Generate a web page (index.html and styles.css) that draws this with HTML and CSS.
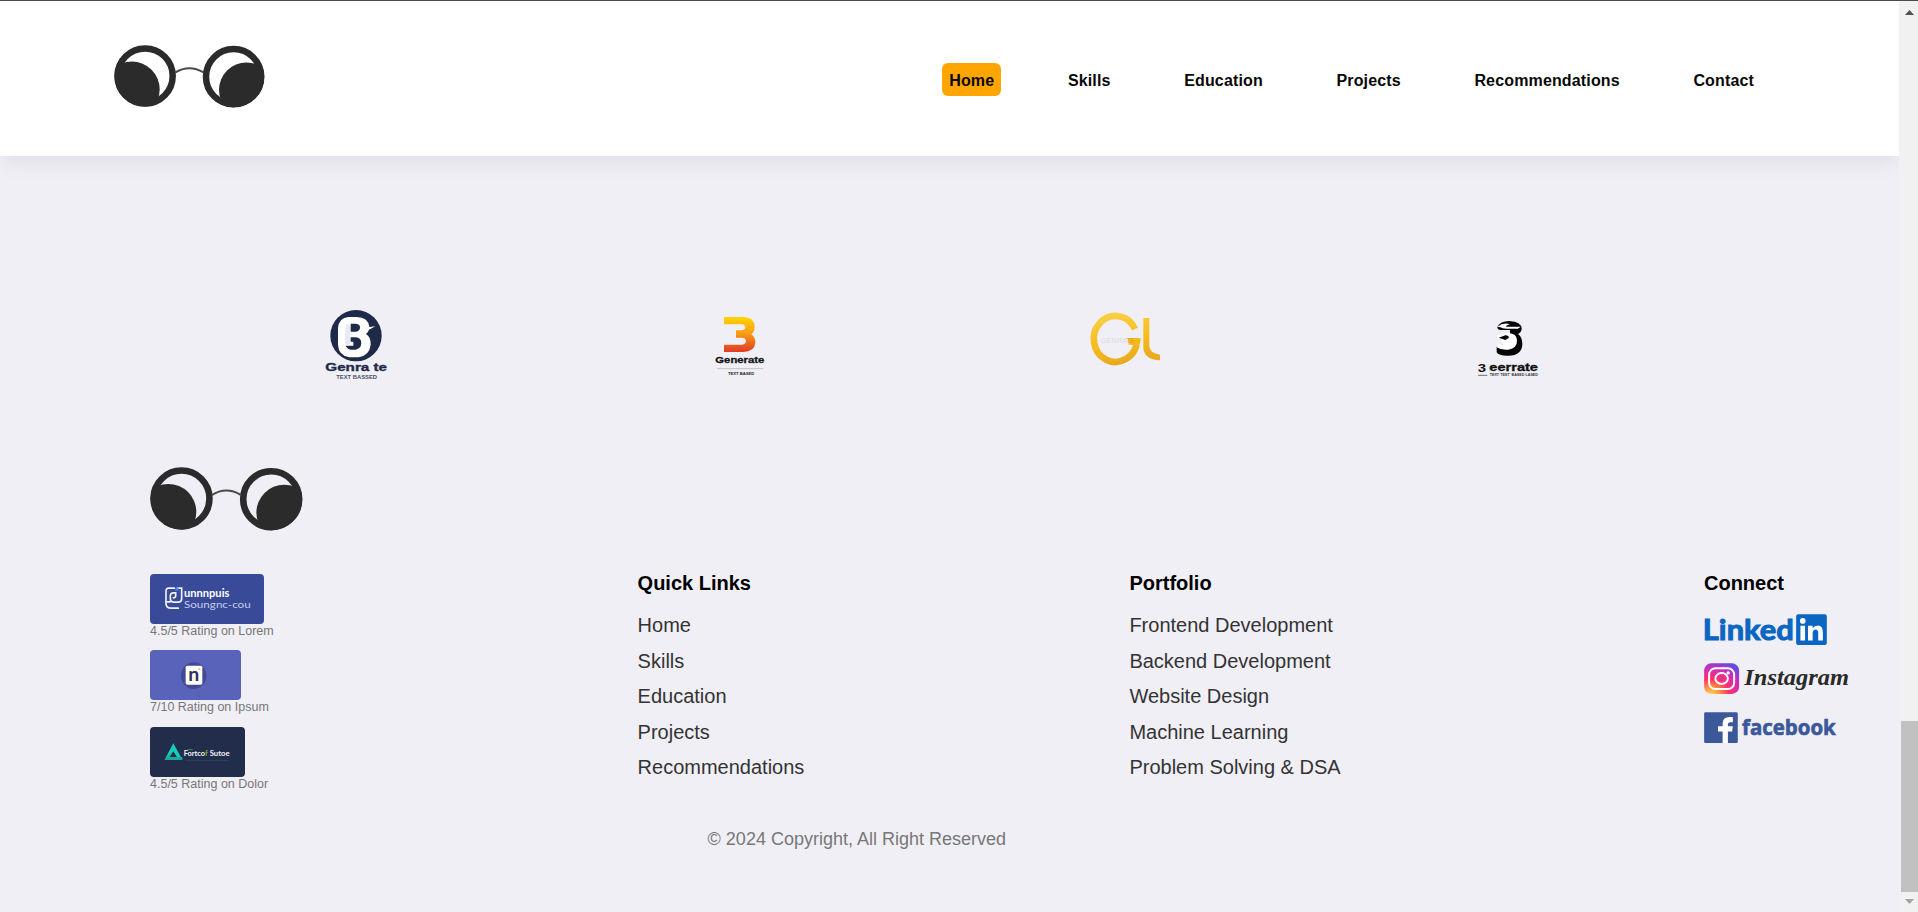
FILE: index.html
```html
<!DOCTYPE html>
<html lang="en">
<head>
<meta charset="utf-8">
<title>Portfolio</title>
<link rel="stylesheet" href="styles.css">
</head>
<body>
<svg class="defs" aria-hidden="true">
  <defs>
    <clipPath id="lensL"><circle cx="55.1" cy="46" r="30.6"/></clipPath>
    <clipPath id="lensR"><circle cx="143.6" cy="46.7" r="30.6"/></clipPath>
    <symbol id="glasses" viewBox="24 14 152 66">
      <g fill="none" stroke="#2b2b2b">
        <circle cx="55.1" cy="46" r="27.6" stroke-width="6.5"/>
        <circle cx="143.6" cy="46.7" r="27.6" stroke-width="6.5"/>
        <path d="M85 42.6Q99 33.8 113.5 42.4" stroke-width="2" stroke="#4a4a4a"/>
      </g>
      <circle cx="42" cy="59.3" r="27.7" fill="#2b2b2b" clip-path="url(#lensL)"/>
      <circle cx="156.6" cy="60" r="27.6" fill="#2b2b2b" clip-path="url(#lensR)"/>
    </symbol>
    <linearGradient id="sunset" x1="0" y1="0" x2="0" y2="1"><stop offset="0" stop-color="#ffd400"/><stop offset=".45" stop-color="#f9a015"/><stop offset="1" stop-color="#e03a26"/></linearGradient>
    <linearGradient id="gold" gradientUnits="userSpaceOnUse" x1="30" y1="40" x2="60" y2="200"><stop offset="0" stop-color="#fbd04a"/><stop offset=".6" stop-color="#f5bd1d"/><stop offset="1" stop-color="#eaa91e"/></linearGradient>
    <radialGradient id="insta" cx=".2" cy="1.02" r="1.15"><stop offset="0" stop-color="#ffd45a"/><stop offset=".2" stop-color="#ff9a3c"/><stop offset=".45" stop-color="#ff3168"/><stop offset=".72" stop-color="#d42bb5"/><stop offset="1" stop-color="#5b4ee0"/></radialGradient>
  </defs>
</svg>

<div class="window">
  <div class="page">
    <header class="header">
      <svg class="header-logo"><use href="#glasses"/></svg>
      <nav class="nav">
        <a class="nav-link active">Home</a>
        <a class="nav-link">Skills</a>
        <a class="nav-link">Education</a>
        <a class="nav-link">Projects</a>
        <a class="nav-link">Recommendations</a>
        <a class="nav-link">Contact</a>
      </nav>
    </header>

    <section class="clients">
      <svg class="client" viewBox="-12 15 300 270">
        <circle cx="138" cy="122" r="77" fill="#1e2a47"/>
        <path d="M84 100Q86 68 116 66H140Q176 68 178 96L196 94L177 104Q174 112 168 117Q184 127 182 150Q178 182 146 187H118Q86 182 84 150Z" fill="#fff"/>
        <path d="M110 84Q102 110 106 150L120 148V94Z" fill="#e9eaf1"/>
        <path d="M122 86H138Q151 88 150 98Q149 109 136 110H122ZM122 127H137Q154 129 154 144Q153 161 137 164Q113 167 107 152H130V140H122Z" fill="#1e2a47"/>
        <text class="wide" x="46" y="229" font-size="32" textLength="185" lengthAdjust="spacingAndGlyphs" fill="#1e2a47" stroke="#1e2a47">Genra te</text>
        <text class="wide" x="79" y="251" font-size="15" textLength="122" lengthAdjust="spacingAndGlyphs" fill="#4a5268">TEXT BASSED</text>
      </svg>
      <svg class="client" viewBox="-30 0 300 270">
        <path d="M72 51H130Q164 53 164 80Q164 96 154 103Q166 111 166 128Q164 154 130 156H72V134H126Q138 132 138 123Q137 113 125 113H108V91H124Q136 90 136 82Q135 74 126 73H72Z" fill="url(#sunset)"/>
        <text class="wide" x="46" y="190" font-size="29" textLength="147" lengthAdjust="spacingAndGlyphs" fill="#151515" stroke="#151515">Generate</text>
        <path d="M51 206H190" stroke="#aaaab0" stroke-width="2"/>
        <text class="wide" x="84" y="225" font-size="12" textLength="79" lengthAdjust="spacingAndGlyphs" fill="#222">TEXT BASED</text>
      </svg>
      <svg class="client" viewBox="-18 0 300 270">
        <text x="62" y="130" class="thin" font-size="24" textLength="80" lengthAdjust="spacingAndGlyphs" fill="#d9d9dd">GENRA</text>
        <path d="M165 87A65 69 0 1 0 171 124H146" fill="none" stroke="url(#gold)" stroke-width="20"/>
        <text x="140" y="130" class="wide" font-size="22" textLength="22" lengthAdjust="spacingAndGlyphs" fill="#e8a51e">TE</text>
        <path d="M190 54H208V138Q209 160 240 164V181Q190 178 190 140Z" fill="url(#gold)"/>
      </svg>
      <svg class="client" viewBox="-6 -30 300 270">
        <path d="M112 51Q120 33 148 33Q184 35 185 56Q185 66 174 72Q187 80 187 104Q185 136 146 137Q116 138 110 127V110H150V60H122Q112 60 112 51Z" fill="#050505"/>
        <path d="M112 51Q130 36 150 43Q139 45 138 50H182L174 56H140Q126 56 122 52Z" fill="#fff"/>
        <path d="M112 78Q124 67 146 69Q170 71 171 90Q172 115 145 119Q122 121 110 112L116 103Q128 107 136 105L122 94L132 85L116 86Z" fill="#fff"/>
        <path d="M116 83L136 76Q148 76 146 84L136 90Z" fill="#050505"/>
        <text class="wide" x="53" y="185" font-size="34" textLength="25" lengthAdjust="spacingAndGlyphs" fill="#111">3</text>
        <text class="wide" x="88" y="182" font-size="34" textLength="146" lengthAdjust="spacingAndGlyphs" fill="#111" stroke="#111">eerrate</text>
        <path d="M54 196H82" stroke="#333" stroke-width="2"/>
        <text class="wide" x="89" y="197" font-size="11" textLength="145" lengthAdjust="spacingAndGlyphs" fill="#333">TEXT TEST' BASED LASED</text>
      </svg>
    </section>

    <footer class="footer">
      <svg class="footer-logo"><use href="#glasses"/></svg>
      <div class="columns">
        <div class="ratings">
          <div class="rating">
            <svg class="badge badge-lorem" viewBox="60 373 342 149">
              <g fill="none" stroke="#eef0fa" stroke-width="5" stroke-linecap="round">
                <path d="M133 415H116Q108 415 108 424V462Q109 475 123 475H145M142 415H155V448Q154 457 145 457H130Q121 456 121 447V437Q122 429 130 429H137V438Q137 444 130 444"/>
                <path d="M108 456H121"/>
              </g>
              <path d="M136 413H145V423H136Z" fill="#4a83e8"/>
              <text class="round bold" x="162" y="441" font-size="31" textLength="136" lengthAdjust="spacingAndGlyphs" fill="#fff">unnnpuis</text>
              <text class="round" x="162" y="475" font-size="30" textLength="200" lengthAdjust="spacingAndGlyphs" fill="#c6cdee">Soungnc-cou</text>
            </svg>
            <p class="rating-text">4.5/5 Rating on Lorem</p>
          </div>
          <div class="rating">
            <svg class="badge badge-ipsum" viewBox="60 600 273 150">
              <ellipse cx="191" cy="677" rx="38" ry="40" fill="#424a96"/>
              <rect x="167" y="647" width="50" height="57" rx="5" fill="#fffdf7"/>
              <text class="round bold" x="175" y="692" font-size="56" textLength="33" lengthAdjust="spacingAndGlyphs" fill="#2d3260">n</text>
              <circle cx="208" cy="658" r="3" fill="#e9b27c"/>
            </svg>
            <p class="rating-text">7/10 Rating on Ipsum</p>
          </div>
          <div class="rating">
            <svg class="badge badge-dolor" viewBox="60 831 285 150">
              <path d="M130 880L157 929H104ZM130 904L119 921H141Z" fill="#16cdb8" fill-rule="evenodd"/>
              <path d="M104 929L126 906L119 921H157V929Z" fill="#1ba99e"/>
              <path d="M172 899H188" stroke="#3f8f3a" stroke-width="3"/>
              <text class="round bold" x="161" y="919" font-size="20" textLength="64" lengthAdjust="spacingAndGlyphs" fill="#f2f4f8">Fortco</text>
              <text class="round bold" x="226" y="919" font-size="20" fill="#65c72f">f</text>
              <text class="round bold" x="239" y="919" font-size="20" textLength="60" lengthAdjust="spacingAndGlyphs" fill="#f2f4f8">Sutoe</text>
              <path d="M165 931H296" stroke="#2f5357" stroke-width="2"/>
            </svg>
            <p class="rating-text">4.5/5 Rating on Dolor</p>
          </div>
        </div>
        <div class="column">
          <h3 class="heading">Quick Links</h3>
          <a class="link">Home</a>
          <a class="link">Skills</a>
          <a class="link">Education</a>
          <a class="link">Projects</a>
          <a class="link">Recommendations</a>
        </div>
        <div class="column">
          <h3 class="heading">Portfolio</h3>
          <a class="link">Frontend Development</a>
          <a class="link">Backend Development</a>
          <a class="link">Website Design</a>
          <a class="link">Machine Learning</a>
          <a class="link">Problem Solving &amp; DSA</a>
        </div>
        <div class="column connect">
          <h3 class="heading">Connect</h3>
          <svg class="social" viewBox="74 161 450 94">
            <text class="round bold" x="68" y="241" font-size="88" textLength="276" lengthAdjust="spacingAndGlyphs" fill="#0a66c2" stroke="#0a66c2" stroke-width="3">Linked</text>
            <rect x="351" y="162" width="93" height="93" rx="6" fill="#0a66c2"/>
            <g fill="#fff"><circle cx="371" cy="182" r="8.5"/><path d="M364 197H378V241H364ZM387 197H401V204Q407 196 417 196Q432 197 432 216V241H418V219Q418 208 410 208Q401 209 401 220V241H387Z"/></g>
          </svg>
          <svg class="social" viewBox="74 308 450 94">
            <rect x="72" y="309" width="106" height="93" rx="22" fill="url(#insta)"/>
            <g fill="none" stroke="#fff" stroke-width="6"><rect x="87" y="324" width="76" height="63" rx="19"/><ellipse cx="125" cy="355" rx="19" ry="16.5"/></g>
            <circle cx="145" cy="338" r="5" fill="#fff"/>
            <text class="script" x="194" y="375" font-size="72" textLength="317" lengthAdjust="spacingAndGlyphs" fill="#292929">Instagram</text>
          </svg>
          <svg class="social" viewBox="74 455 450 94">
            <rect x="72" y="456" width="102" height="93" rx="4" fill="#3b5998"/>
            <path d="M128 549V514H114V498H128V489Q129 470 149 470H159V486H151Q144 486 144 493V498H159L157 514H144V549Z" fill="#fff"/>
            <text class="face" x="187" y="525" font-size="66" textLength="284" lengthAdjust="spacingAndGlyphs" fill="#3b5998" stroke="#3b5998" stroke-width="2">facebook</text>
          </svg>
        </div>
      </div>
      <p class="copyright">© 2024 Copyright, All Right Reserved</p>
    </footer>
  </div>

  <div class="scrollbar">
    <svg class="arrow" viewBox="0 0 9 5"><path d="M0 5L4.5 0L9 5Z" fill="#505050"/></svg>
    <div class="thumb"></div>
    <svg class="arrow" viewBox="0 0 9 5"><path d="M0 0H9L4.5 5Z" fill="#a3a3a3"/></svg>
  </div>
</div>
</body>
</html>
```
FILE: styles.css
```css
* { box-sizing: border-box; margin: 0; padding: 0; }
body {
  font-family: "Liberation Sans", Arial, sans-serif;
  background: #f0eff6;
  overflow: hidden;
}
.defs { position: absolute; width: 0; height: 0; }
.window { display: flex; width: 1918px; height: 912px; border-top: 1px solid #4b4b4b; }
.page { width: 1899px; overflow: hidden; }

.header {
  display: flex;
  justify-content: space-between;
  align-items: flex-start;
  height: 155px;
  padding: 43px 138px 0 114px;
  background: #fff;
  box-shadow: 0 8px 20px rgba(0, 0, 0, .06);
}
.header-logo { width: 152px; height: 66px; }
.nav { display: flex; gap: 59.6px; margin-top: 19px; }
.nav-link {
  height: 33px;
  padding: 0 7px;
  border-radius: 6px;
  font-size: 16px;
  font-weight: bold;
  line-height: 35px;
  letter-spacing: .15px;
  color: #080808;
}
.active { background: #ffa500; }

.clients {
  display: grid;
  grid-template-columns: repeat(4, 384px);
  justify-items: center;
  padding: 144px 0 0 164px;
}
.client { width: 100px; height: 90px; }
.wide { font-family: "Liberation Sans", Arial, sans-serif; font-weight: bold; }
.thin { font-family: "Liberation Sans", Arial, sans-serif; }
.round { font-family: Lato, sans-serif; }
.bold { font-weight: bold; }
.script { font-family: "Liberation Serif", serif; font-style: italic; font-weight: bold; }
.face { font-family: "Open Sans", sans-serif; font-weight: bold; }

.footer { padding: 76px 0 0 150px; }
.footer-logo { display: block; width: 154px; height: 67px; }
.columns { display: grid; grid-template-columns: 487.6px 491.8px 574.6px 1fr; margin-top: 35px; height: 226px; }
.ratings { display: flex; flex-direction: column; gap: 12.3px; padding-top: 6px; }
.rating { height: 64px; }
.badge { display: block; height: 50px; border-radius: 4px; }
.badge-lorem { width: 114px; background: #384a98; }
.badge-ipsum { width: 91px; background: #5963b9; }
.badge-dolor { width: 95px; background: #222d4c; }
.rating-text { font-size: 12.5px; line-height: 14px; color: #777; }
.column { display: flex; flex-direction: column; align-items: flex-start; }
.heading { height: 39px; font-size: 20px; line-height: 30px; color: #000; }
.link { height: 35.6px; font-size: 20px; line-height: 36px; color: #333; }
.connect { gap: 18px; }
.connect .heading { height: 28px; }
.social { width: 150px; height: 31px; overflow: visible; }
.copyright { padding-left: 557.6px; margin-top: 34px; font-size: 18px; line-height: 22px; color: #777; }

.scrollbar {
  display: flex;
  flex-direction: column;
  align-items: center;
  width: 19px;
  padding: 9px 0 8px 2px;
  background: #f1f1f1;
}
.arrow { width: 9px; height: 5px; }
.thumb { width: 17px; height: 171px; margin: auto 0 7px; background: #c1c1c1; }
```
